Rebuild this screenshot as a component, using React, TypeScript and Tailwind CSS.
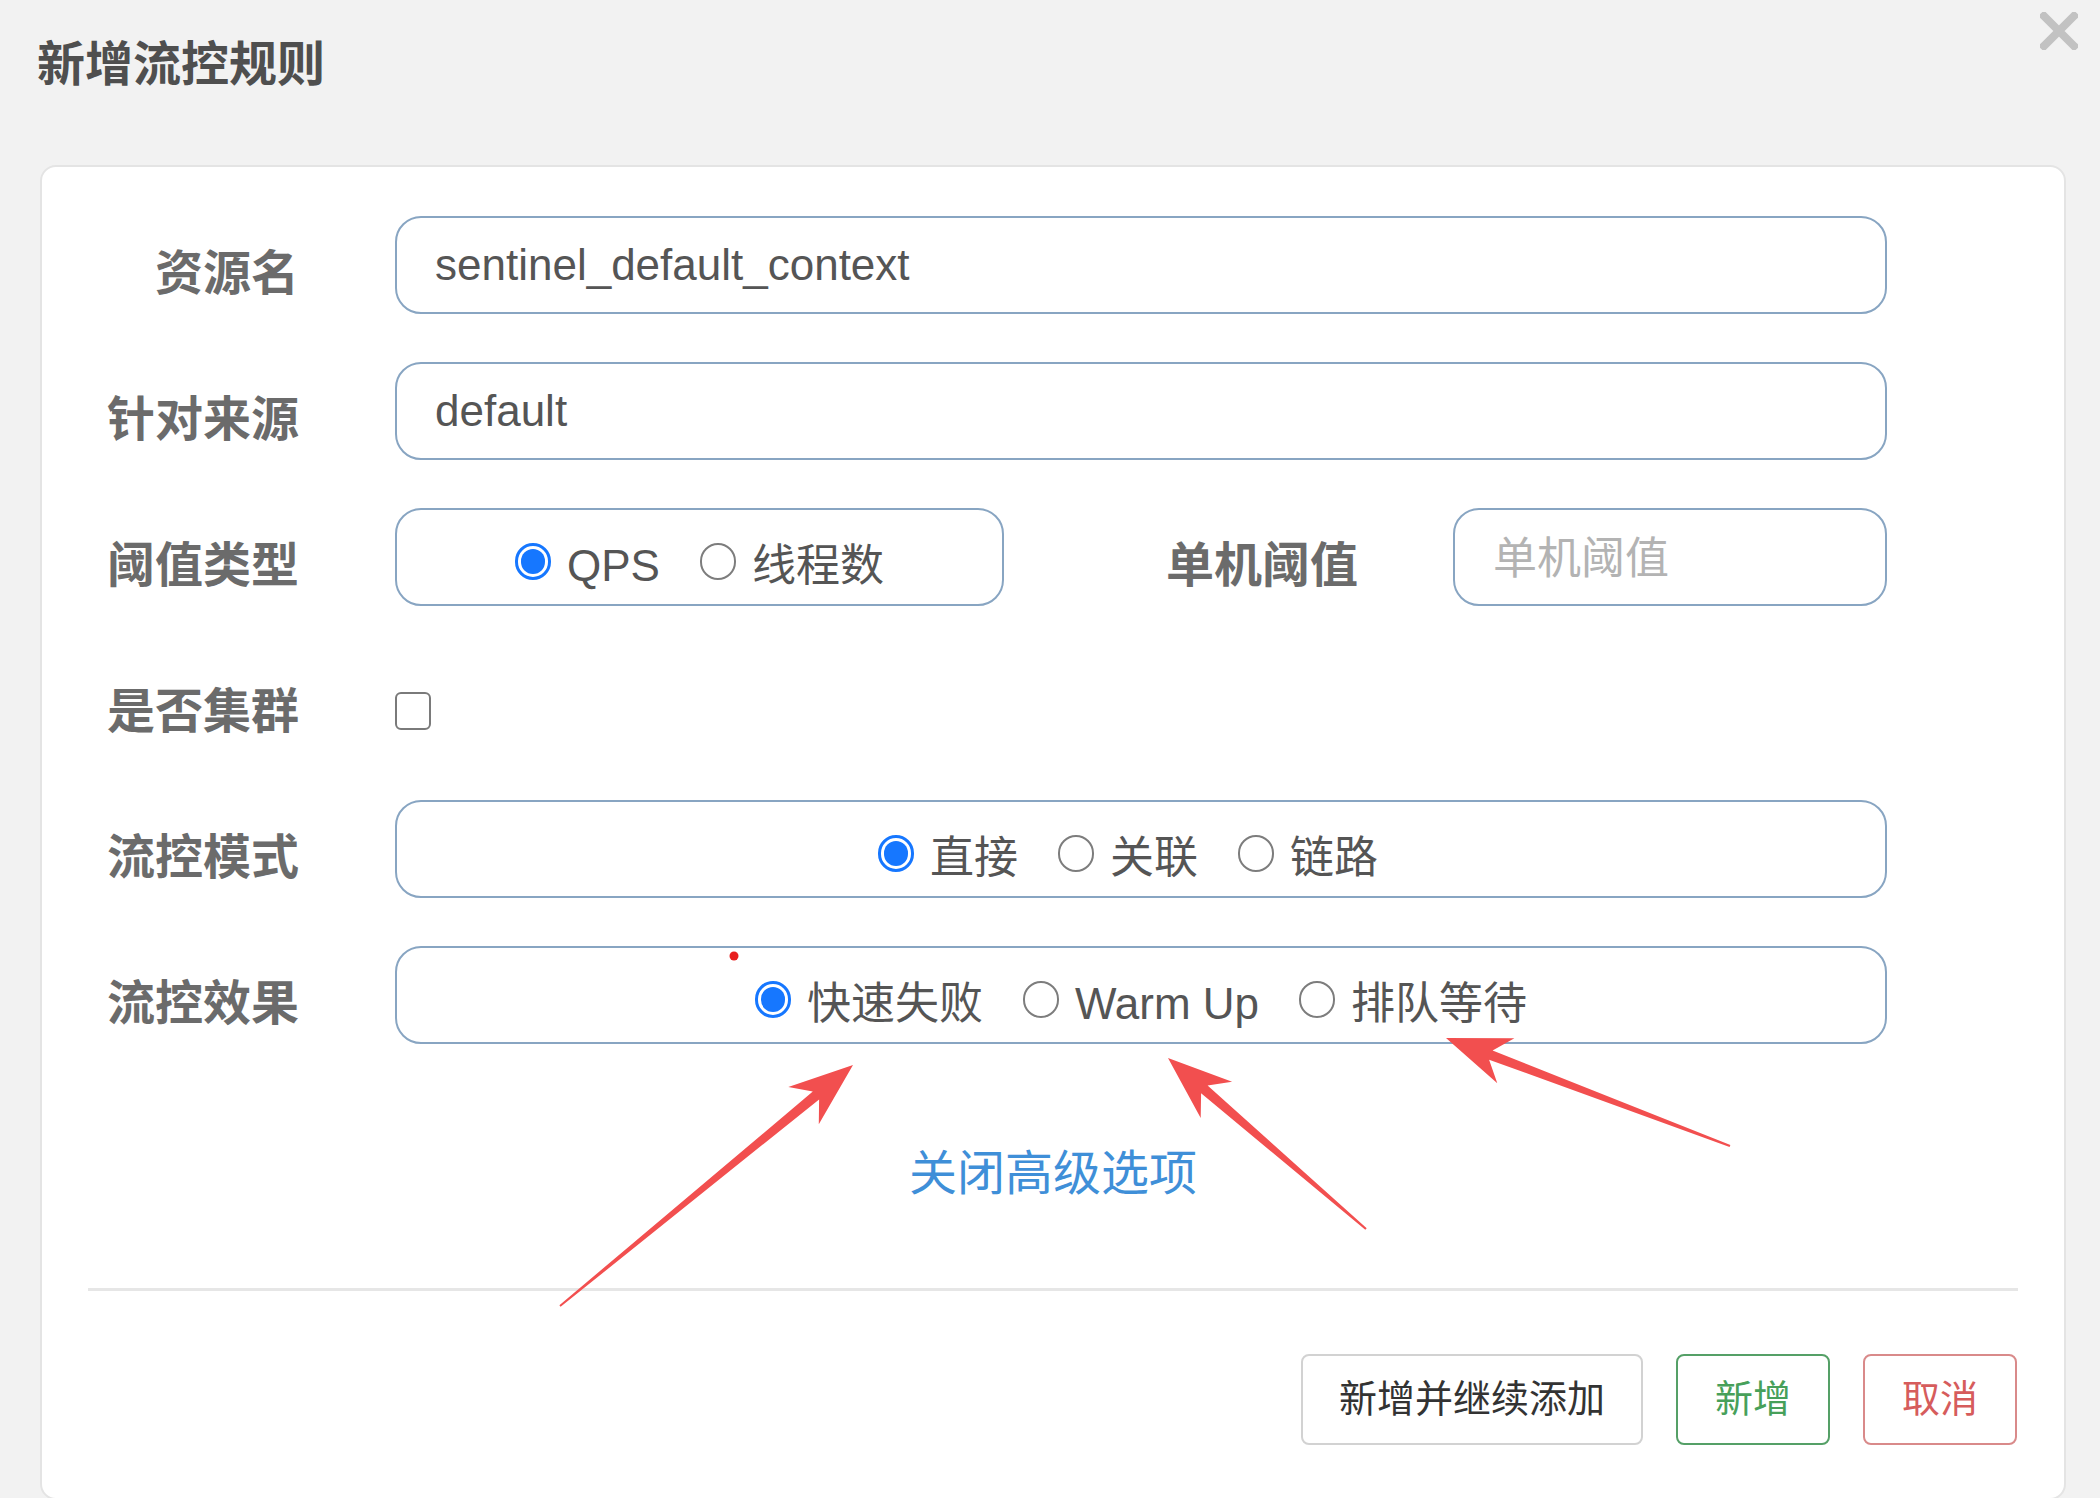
import React from 'react';

const FONT = "font-['Liberation_Sans','Noto_Sans_CJK_SC',sans-serif]";

function arrowPoints(tx: number, ty: number, px: number, py: number) {
  const dx = px - tx;
  const dy = py - ty;
  const len = Math.hypot(dx, dy);
  const ux = dx / len;
  const uy = dy / len;
  const nx = -uy;
  const ny = ux;
  const head = 64;
  const neck = 48;
  const wing = 24;
  const shaft = 5;
  const tail = 1;
  const pts: [number, number][] = [
    [tx + nx * tail, ty + ny * tail],
    [px - ux * neck + nx * shaft, py - uy * neck + ny * shaft],
    [px - ux * head + nx * wing, py - uy * head + ny * wing],
    [px, py],
    [px - ux * head - nx * wing, py - uy * head - ny * wing],
    [px - ux * neck - nx * shaft, py - uy * neck - ny * shaft],
    [tx - nx * tail, ty - ny * tail],
  ];
  return pts.map(([x, y]) => `${x.toFixed(1)},${y.toFixed(1)}`).join(' ');
}

function Radio({ label, checked = false }: { label: string; checked?: boolean }) {
  return (
    <label className="flex items-center mr-[40px] last:mr-0">
      {checked ? (
        <span className="flex items-center justify-center w-[36px] h-[37px] rounded-full border-[3px] border-[#1677ff] bg-white">
          <span className="w-[24px] h-[25px] rounded-full bg-[#1677ff]" />
        </span>
      ) : (
        <span className="w-[36px] h-[37px] rounded-full border-[2.5px] border-[#7d7d7d] bg-white" />
      )}
      <span className="ml-[16px] mt-[10px] text-[44px] leading-none text-[#555]">{label}</span>
    </label>
  );
}

function Label({ children }: { children: React.ReactNode }) {
  return (
    <div className="w-[257px] shrink-0 text-right text-[48px] font-bold leading-none text-[#6b6b6b] mt-[17px]">
      {children}
    </div>
  );
}

const boxCls = 'h-[98px] rounded-[26px] border-2 border-[#88a5c2] bg-white';

export default function App() {
  return (
    <div className={`relative w-[2100px] h-[1498px] overflow-hidden bg-[#f2f2f2] ${FONT}`}>
      {/* header */}
      <div className="flex justify-between h-[165px] pl-[37px] pr-[22px]">
        <h1 className="pt-[41px] text-[48px] font-bold leading-none text-[#4f4f4f]">新增流控规则</h1>
        <svg className="mt-[12px]" width="38" height="38" viewBox="0 0 38 38">
          <path d="M4 4 L34 34 M34 4 L4 34" stroke="#c2c2c2" strokeWidth="8" strokeLinecap="square" />
        </svg>
      </div>

      {/* card */}
      <div className="ml-[40px] w-[2026px] h-[1335px] rounded-[16px] border-2 border-[#e4e4e4] bg-white pt-[49px]">
        <div className="flex flex-col gap-[48px]">
          <div className="flex items-center h-[98px]">
            <Label>资源名</Label>
            <input
              readOnly
              defaultValue="sentinel_default_context"
              className={`ml-[96px] w-[1492px] ${boxCls} px-[38px] text-[44px] text-[#555] outline-none`}
            />
          </div>

          <div className="flex items-center h-[98px]">
            <Label>针对来源</Label>
            <input
              readOnly
              defaultValue="default"
              className={`ml-[96px] w-[1492px] ${boxCls} px-[38px] text-[44px] text-[#555] outline-none`}
            />
          </div>

          <div className="flex items-center h-[98px]">
            <Label>阈值类型</Label>
            <div className={`ml-[96px] w-[609px] ${boxCls} flex items-center justify-center pt-[8px]`}>
              <Radio label="QPS" checked />
              <Radio label="线程数" />
            </div>
            <div className="ml-[162px] w-[192px] text-[48px] font-bold leading-none text-[#6b6b6b] mt-[17px]">
              单机阈值
            </div>
            <input
              readOnly
              placeholder="单机阈值"
              className={`ml-[95px] w-[434px] ${boxCls} px-[38px] pt-[4px] text-[44px] text-[#555] placeholder:text-[#b3b3b3] outline-none`}
            />
          </div>

          <div className="flex items-center h-[98px]">
            <Label>是否集群</Label>
            <span className="ml-[96px] mt-[16px] w-[36px] h-[38px] rounded-[6px] border-[2.5px] border-[#7a7a7a] bg-white" />
          </div>

          <div className="flex items-center h-[98px]">
            <Label>流控模式</Label>
            <div className={`ml-[96px] w-[1492px] ${boxCls} flex items-center justify-center pr-[26px] pt-[8px]`}>
              <Radio label="直接" checked />
              <Radio label="关联" />
              <Radio label="链路" />
            </div>
          </div>

          <div className="flex items-center h-[98px]">
            <Label>流控效果</Label>
            <div className={`ml-[96px] w-[1492px] ${boxCls} flex items-center justify-center pt-[8px]`}>
              <Radio label="快速失败" checked />
              <Radio label="Warm Up" />
              <Radio label="排队等待" />
            </div>
          </div>
        </div>

        <div className="mt-[106px] text-center text-[48px] leading-none text-[#3f8fd8]">关闭高级选项</div>

        <div className="mt-[90px] mx-[46px] h-[3px] bg-[#e6e6e6]" />

        <div className="mt-[63px] pr-[47px] flex justify-end gap-[33px]">
          <button className="w-[342px] h-[91px] rounded-[8px] border-2 border-[#d2d2d2] bg-white text-[38px] text-[#333]">
            新增并继续添加
          </button>
          <button className="w-[154px] h-[91px] rounded-[8px] border-2 border-[#55a067] bg-white text-[38px] text-[#47a05a]">
            新增
          </button>
          <button className="w-[154px] h-[91px] rounded-[8px] border-2 border-[#d98a8a] bg-white text-[38px] text-[#d65c5c]">
            取消
          </button>
        </div>
      </div>

      {/* annotation overlay */}
      <svg className="absolute inset-0 pointer-events-none" width="2100" height="1498" viewBox="0 0 2100 1498">
        <g fill="#f24f4f">
          <polygon points={arrowPoints(560, 1306, 853, 1065)} />
          <polygon points={arrowPoints(1366, 1229, 1168, 1058)} />
          <polygon points={arrowPoints(1730, 1146, 1446, 1038)} />
          <circle cx="734" cy="956" r="4.5" fill="#e81e1e" />
        </g>
      </svg>
    </div>
  );
}
